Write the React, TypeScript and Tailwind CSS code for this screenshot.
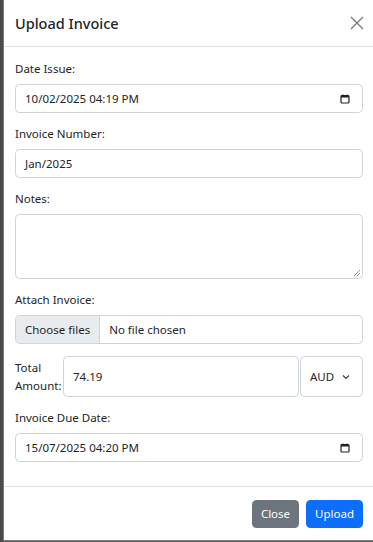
import React from "react";

const font = { fontFamily: '"Noto Sans", "Open Sans", sans-serif' };

function CalendarIcon() {
  return (
    <svg width="10" height="10" viewBox="0 0 10 10" className="shrink-0">
      <rect x="1" y="1.5" width="8" height="7.5" rx="1" fill="none" stroke="#222" strokeWidth="1.2" />
      <rect x="1" y="1.5" width="8" height="2" fill="#222" />
      <line x1="3" y1="0.5" x2="3" y2="2" stroke="#222" strokeWidth="1" />
      <line x1="7" y1="0.5" x2="7" y2="2" stroke="#222" strokeWidth="1" />
    </svg>
  );
}

function DateField({ value }: { value: string }) {
  return (
    <div className="flex h-[29px] items-center justify-between rounded-[4.5px] border border-[#ced4da] bg-white pl-[9px] pr-[12px] text-[11.5px] text-[#212529]">
      <span>{value}</span>
      <CalendarIcon />
    </div>
  );
}

function Label({ children }: { children: React.ReactNode }) {
  return <div className="mb-[6px] text-[11.5px] leading-[18px] text-[#212529]">{children}</div>;
}

export default function App() {
  return (
    <div className="flex h-[542px] w-[373px] overflow-hidden bg-[#5b5b5b]" style={font}>
      <div className="w-[3px] shrink-0 bg-[#4a4a4a]" />
      <div className="flex h-[541px] w-[372px] shrink-0 flex-col border-b border-l border-[#7a7a7a] bg-white">
        {/* header */}
        <div className="flex h-[47px] items-center justify-between border-b border-[#dee2e6] pl-[11px] pr-[11px]">
          <div className="text-[14.5px] font-medium leading-[18px] text-[#212529]">Upload Invoice</div>
          <svg width="14" height="14" viewBox="0 0 14 14">
            <path d="M1 1 L13 13 M13 1 L1 13" stroke="#7b7b7b" strokeWidth="1.4" fill="none" />
          </svg>
        </div>
        {/* body */}
        <div className="flex flex-col pl-[11px] pr-[12px] pt-[13px]">
          <div className="mb-[12px]">
            <Label>Date Issue:</Label>
            <DateField value="10/02/2025 04:19  PM" />
          </div>
          <div className="mb-[12px]">
            <Label>Invoice Number:</Label>
            <div className="flex h-[29px] items-center rounded-[4.5px] border border-[#ced4da] bg-white px-[9px] text-[11.5px] text-[#212529]">
              Jan/2025
            </div>
          </div>
          <div className="mb-[12px]">
            <Label>Notes:</Label>
            <div className="relative h-[65px] rounded-[4.5px] border border-[#ced4da] bg-white">
              <svg width="8" height="8" viewBox="0 0 8 8" className="absolute bottom-[1px] right-[1px]">
                <path d="M7 1 L1 7 M7 4 L4 7" stroke="#888" strokeWidth="0.9" fill="none" />
              </svg>
            </div>
          </div>
          <div className="mb-[12px]">
            <Label>Attach Invoice:</Label>
            <div className="flex h-[29px] overflow-hidden rounded-[4.5px] border border-[#ced4da] bg-white text-[11.5px] text-[#212529]">
              <div className="flex items-center border-r border-[#ced4da] bg-[#e9ecef] px-[9px]">Choose files</div>
              <div className="flex items-center pl-[9px]">No file chosen</div>
            </div>
          </div>
          <div className="mb-[12px] flex h-[41px] items-stretch">
            <div className="flex w-[48px] shrink-0 flex-col justify-center text-[11.5px] leading-[18px] text-[#212529]">
              <span>Total</span>
              <span>Amount:</span>
            </div>
            <div className="flex flex-1 items-center rounded-[4.5px] border border-[#ced4da] bg-white px-[9px] text-[11.5px] text-[#212529]">
              74.19
            </div>
            <div className="ml-[1px] flex w-[63px] items-center justify-between rounded-[4.5px] border border-[#ced4da] bg-white pl-[9px] pr-[12px] text-[11.5px] text-[#212529]">
              <span>AUD</span>
              <svg width="8" height="6" viewBox="0 0 8 6">
                <path d="M1 1.5 L4 4.5 L7 1.5" stroke="#343a40" strokeWidth="1.1" fill="none" />
              </svg>
            </div>
          </div>
          <div className="mb-[12px]">
            <Label>Invoice Due Date:</Label>
            <DateField value="15/07/2025 04:20  PM" />
          </div>
        </div>
        {/* footer */}
        <div className="mt-auto flex h-[54px] items-center justify-end gap-[7px] border-t border-[#dee2e6] pl-[9px] pr-[12px]">
          <div className="flex h-[28px] items-center rounded-[4.5px] bg-[#6c757d] px-[9px] text-[11.5px] text-white">Close</div>
          <div className="flex h-[28px] items-center rounded-[4.5px] bg-[#0d6efd] px-[9px] text-[11.5px] text-white">Upload</div>
        </div>
      </div>
    </div>
  );
}
